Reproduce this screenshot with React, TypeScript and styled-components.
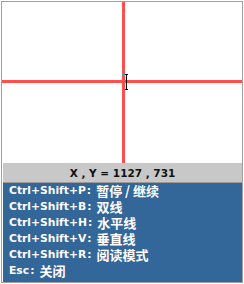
import styled, { createGlobalStyle } from 'styled-components';

const GlobalStyle = createGlobalStyle`
  html, body {
    margin: 0;
    padding: 0;
    background: #fff;
  }
`;

const Frame = styled.div`
  box-sizing: border-box;
  margin: 1px 0 0 1px;
  width: 242px;
  height: 282px;
  border: 1px solid #a0a0a0;
  display: flex;
  flex-direction: column;
  background: #fff;
`;

const Canvas = styled.div`
  position: relative;
  height: 161px;
  flex: none;
  overflow: hidden;
  background: #fff;
`;

const LineV = styled.div`
  position: absolute;
  left: 120px;
  top: 0;
  bottom: 0;
  width: 3px;
  background: #ff4f4f;
`;

const LineH = styled.div`
  position: absolute;
  left: 0;
  right: 0;
  top: 78px;
  height: 3px;
  background: #ff4f4f;
`;

const Cursor = styled.svg`
  position: absolute;
  left: 120px;
  top: 72px;
`;

const Info = styled.div`
  flex: 1;
  display: flex;
  flex-direction: column;
  padding: 0 0 0 1px;
`;

const CoordBar = styled.div`
  height: 18px;
  flex: none;
  background: #c8c8c8;
  border-bottom: 1px solid #9a9a9a;
  display: flex;
  align-items: center;
  justify-content: center;
  font-family: 'DejaVu Sans', sans-serif;
  font-weight: bold;
  font-size: 10.5px;
  line-height: 12px;
  color: #111;
  padding-top: 1px;
  box-sizing: content-box;
`;

const KeyList = styled.div`
  flex: 1;
  background: #336699;
  padding: 0 0 0 6px;
  display: flex;
  flex-direction: column;
`;

const KeyRow = styled.div`
  height: 16px;
  line-height: 16px;
  display: flex;
  align-items: center;
  color: #fff;
  white-space: nowrap;
`;

const Key = styled.span`
  font-family: 'DejaVu Sans', sans-serif;
  font-weight: bold;
  font-size: 10.75px;
  line-height: 16px;
`;

const Colon = styled.span`
  font-family: 'DejaVu Sans', sans-serif;
  font-weight: bold;
  font-size: 10.75px;
  line-height: 16px;
  margin: 0 5px 0 1px;
`;

const Action = styled.span`
  font-family: 'Noto Sans CJK SC', 'DejaVu Sans', sans-serif;
  font-weight: bold;
  font-size: 13px;
  line-height: 16px;
`;

const shortcuts = [
  { key: 'Ctrl+Shift+P', action: '暂停 / 继续' },
  { key: 'Ctrl+Shift+B', action: '双线' },
  { key: 'Ctrl+Shift+H', action: '水平线' },
  { key: 'Ctrl+Shift+V', action: '垂直线' },
  { key: 'Ctrl+Shift+R', action: '阅读模式' },
  { key: 'Esc', action: '关闭' },
];

export default function App() {
  return (
    <>
      <GlobalStyle />
      <Frame>
        <Canvas>
          <LineV />
          <LineH />
          <Cursor width="10" height="18" viewBox="0 0 10 18">
            <rect x="0" y="0" width="3" height="1" fill="#2aa8a8" />
            <rect x="0" y="15" width="3" height="1" fill="#2aa8a8" />
            <path d="M3 0.5 H6 M3 15.5 H6 M4.5 0.5 V15.5" stroke="#000" strokeWidth="1" fill="none" />
          </Cursor>
        </Canvas>
        <Info>
          <CoordBar>X , Y = 1127 , 731</CoordBar>
          <KeyList>
            {shortcuts.map((s) => (
              <KeyRow key={s.key}>
                <Key>{s.key}</Key>
                <Colon>:</Colon>
                <Action>{s.action}</Action>
              </KeyRow>
            ))}
          </KeyList>
        </Info>
      </Frame>
    </>
  );
}
